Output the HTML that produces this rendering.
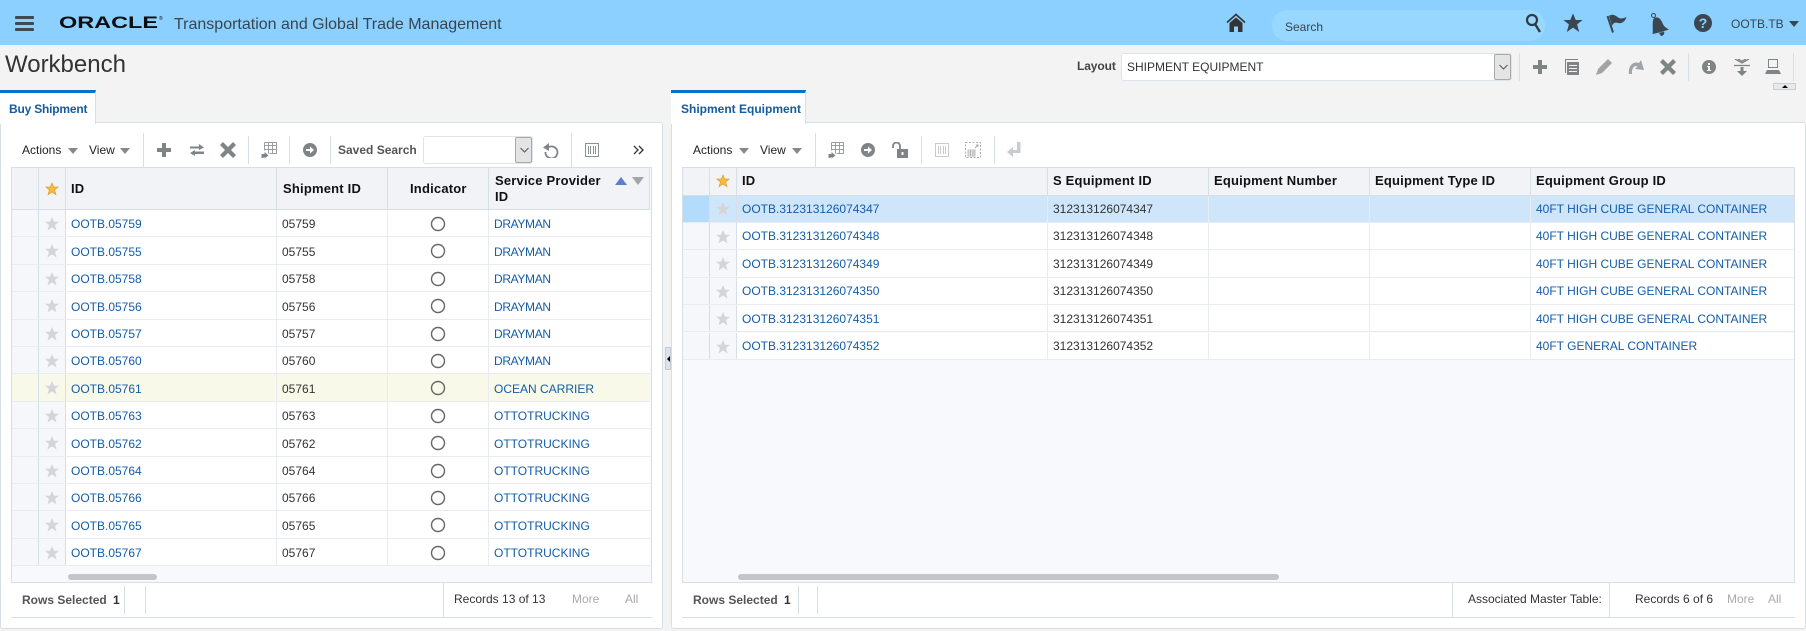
<!DOCTYPE html>
<html><head><meta charset="utf-8"><title>Workbench</title>
<style>
html,body{margin:0;padding:0}
body{width:1806px;height:631px;overflow:hidden;background:#f3f3f3;position:relative;font-family:"Liberation Sans",Arial,sans-serif;font-size:12px;color:#333}
.a,.t,svg.i{position:absolute}
.t{white-space:nowrap;line-height:14px}
.b{font-weight:bold}
.h{font-weight:bold;font-size:13px;color:#111;letter-spacing:.2px}
.vs{position:absolute;width:1px;background:#d6dfe6}
.hs{position:absolute;height:1px;background:#d6dfe6}
.tbl{position:absolute;background:#f7f9fc;border:1px solid #d6dfe6;box-sizing:border-box}
.r{position:absolute;height:27.4px;background:#fff;box-sizing:border-box;border-bottom:1px solid #e8ebef}
.r .t{top:6.5px}
#L .r .t{top:7.4px}
.c0{position:absolute;top:0;bottom:0;background:#f5f7fb;border-right:1px solid #d6dfe6}
.c1{position:absolute;top:0;bottom:0;background:#f5f7fb;border-right:1px solid #d6dfe6}
.v{position:absolute;top:0;bottom:0;width:1px;background:#e8ebef}
a,.l{color:#145ca8;text-decoration:none}
.dm{letter-spacing:-.35px}
.sel{background:#cfe6fa}
.sel .c0{background:#b3dbfb}.sel .c1{background:#cfe6fa}
.hl{background:#f8f9e9}.hl .c0,.hl .c1{background:#f8f9e9}
.hr{position:absolute;background:#f1f3f7;border-bottom:1px solid #d6dfe6;box-sizing:border-box}
.tri{position:absolute;width:0;height:0;border-left:5px solid transparent;border-right:5px solid transparent;border-top:6.5px solid #888}
.sb{position:absolute;height:6px;background:#c3c5c9;border-radius:3px;top:574px}
.sel-box{position:absolute;background:#fff;border:1px solid #dfe4ea;border-radius:3px;box-sizing:border-box}
.dd{position:absolute;right:0;top:0;bottom:0;width:17px;background:#e4e4e4;border:1px solid #a9a9a9;border-radius:2px;box-sizing:border-box}
.g{fill:#7f8487}
.lg{fill:#c9cccf}
</style></head>
<body>
<svg width="0" height="0" style="position:absolute">
<defs>
<polygon id="star" points="0,-7 2,-2.2 7,-2.2 3,1 4.5,6.5 0,3.4 -4.5,6.5 -3,1 -7,-2.2 -2,-2.2"/>
</defs>
</svg>

<!-- top bar -->
<div class="a" style="left:0;top:0;width:1806px;height:45px;background:#8cd0ff"></div>
<div class="a" style="left:15px;top:16px;width:19px;height:3px;background:#3d4a54;border-radius:1px"></div>
<div class="a" style="left:15px;top:22px;width:19px;height:3px;background:#3d4a54;border-radius:1px"></div>
<div class="a" style="left:15px;top:28px;width:19px;height:3px;background:#3d4a54;border-radius:1px"></div>
<svg class="i" style="left:55px;top:10px" width="112" height="24"><text x="4" y="18" font-family="Liberation Sans" font-size="16.5" font-weight="bold" fill="#0b0d10" textLength="99" lengthAdjust="spacingAndGlyphs">ORACLE</text><text x="104" y="10" font-family="Liberation Sans" font-size="5" fill="#0b0d10">®</text></svg>
<div class="t" style="left:174px;top:16px;font-size:16px;line-height:18px;color:#38454f">Transportation and Global Trade Management</div>
<svg class="i" style="left:1226px;top:13px" width="20" height="20"><path d="M1 9.5 10 1.5 19 9.5" fill="none" stroke="#333" stroke-width="1.6"/><path d="M3.5 10 10 4.5 16.500 10V19H12V13.500H8V19H3.500Z" fill="#333"/></svg>
<div class="a" style="left:1272px;top:10px;width:273px;height:31px;border-radius:15px;background:#98d7ff"></div>
<div class="t" style="left:1285px;top:20px;color:#38454f">Search</div>
<svg class="i" style="left:1524px;top:12px" width="20" height="24"><circle cx="8" cy="8" r="5" fill="none" stroke="#2f3a42" stroke-width="2.200"/><path d="M11 12 16 20" stroke="#2f3a42" stroke-width="2.400"/></svg>
<svg class="i" style="left:1562px;top:12px" width="22" height="22" viewBox="-8 -8 16 16"><use href="#star" fill="#3a4750"/></svg>
<svg class="i" style="left:1606px;top:12px" width="22" height="24"><path d="M1.500 4 7 20.500" stroke="#3a4750" stroke-width="2"/><path d="M3 4C7 1 10 4 13 6 16 7 18 6 20.500 5 19.500 9 16 12 12 11 9 10 7 11 6 14Z" fill="#3a4750"/></svg>
<svg class="i" style="left:1650px;top:11px" width="22" height="26"><circle cx="3.500" cy="4.500" r="2" fill="none" stroke="#3a4750"/><path d="M4 7C8 5 11 8 12.500 12 13.500 15 16 17 19 18.500 14 20 8 22 2.500 23 3.500 18 1.500 11 4 7Z" fill="#3a4750"/><path d="M9 22 14 20.500C15 23 13 25 11 25Z" fill="#3a4750"/></svg>
<svg class="i" style="left:1694px;top:14px" width="18" height="18"><circle cx="9" cy="9" r="9" fill="#3a4750"/><text x="9" y="14" text-anchor="middle" font-family="Liberation Sans" font-size="14" font-weight="bold" fill="#8cd0ff">?</text></svg>
<div class="t" style="left:1731px;top:17px;color:#38454f">OOTB.TB</div>
<div class="tri" style="left:1789px;top:21px;border-top-color:#3a4750"></div>

<!-- title / layout row -->
<div class="t" style="left:5px;top:52px;font-size:24px;line-height:26px;color:#333">Workbench</div>
<div class="t b" style="left:1077px;top:59px;color:#444;letter-spacing:-.1px">Layout</div>
<div class="sel-box" style="left:1121px;top:53px;width:391px;height:28px"><div class="dd"></div></div>
<svg class="i" style="left:1498px;top:62px" width="11" height="10"><path d="M1.500 3 5.500 7 9.500 3" fill="none" stroke="#555"/></svg>
<div class="t" style="left:1127px;top:60px;color:#333">SHIPMENT EQUIPMENT</div>
<div class="vs" style="left:1519px;top:53px;height:28px"></div>
<svg class="i" style="left:1532px;top:59px" width="16" height="16"><path d="M6 1h4v5h5v4h-5v5H6v-5H1V6h5z" class="g"/></svg>
<svg class="i" style="left:1564px;top:59px" width="16" height="17"><path d="M1 0h13v1H2v13H1z" class="g"/><path d="M3 3h12v13H3z" class="g"/><path d="M5 6.500h8M5 9.500h8M5 12.500h8" stroke="#f3f3f3"/></svg>
<svg class="i" style="left:1596px;top:59px" width="16" height="16"><path d="M12 0l4 4-10 10-6 2 2-6z" style="fill:#a0a4a7"/></svg>
<svg class="i" style="left:1628px;top:59px" width="17" height="16"><path d="M1 15C0 7 5 2 11 4L13 1 16 11 7 10 9.500 7.500C6.500 6 3.500 9 4 15Z" style="fill:#a0a4a7"/></svg>
<svg class="i" style="left:1660px;top:59px" width="16" height="16"><path d="M3 0 8 5 13 0 16 3 11 8 16 13 13 16 8 11 3 16 0 13 5 8 0 3Z" class="g"/></svg>
<div class="vs" style="left:1688px;top:53px;height:28px"></div>
<svg class="i" style="left:1702px;top:60px" width="14" height="14"><circle cx="7" cy="7" r="7" class="g"/><path d="M6 3h2v2H6zM5 6h3v4h1v1H5v-1h1V7H5z" fill="#f3f3f3"/></svg>
<svg class="i" style="left:1734px;top:59px" width="16" height="17"><path d="M1 0 8 4 15 0M4 0 8 2.200 12 0" fill="none" stroke="#7f8487" stroke-width="1.300"/><path d="M0 6.500h16" stroke="#7f8487" stroke-width="1.300"/><path d="M6.500 8h3v4H13l-5 5-5-5h3.500z" class="g"/></svg>
<svg class="i" style="left:1765px;top:59px" width="16" height="16"><rect x="3.500" y=".5" width="9" height="8" fill="none" stroke="#7f8487"/><path d="M2 11h12l2 4H0z" class="g"/></svg>
<div class="vs" style="left:1793px;top:53px;height:28px"></div>
<div class="a" style="left:1773px;top:83px;width:23px;height:7px;background:#e9e9e9;border:1px solid #c9ced3;box-sizing:border-box"></div>
<div class="a" style="left:1782px;top:85px;width:0;height:0;border-left:3px solid transparent;border-right:3px solid transparent;border-bottom:3px solid #000"></div>

<!-- panels -->
<div class="a" style="left:0;top:122px;width:663px;height:507px;background:#fff;border:1px solid #d6dfe6;border-radius:3px;box-sizing:border-box"></div>
<div class="a" style="left:671px;top:122px;width:1135px;height:507px;background:#fff;border:1px solid #d6dfe6;border-radius:3px;box-sizing:border-box"></div>
<div class="a" style="left:665px;top:347px;width:6px;height:23px;background:#dde3ea;border:1px solid #c4ccd4;box-sizing:border-box"></div>
<div class="a" style="left:667px;top:356px;width:0;height:0;border-top:3.500px solid transparent;border-bottom:3.500px solid transparent;border-right:3.500px solid #000"></div>

<!-- tabs -->
<div class="a" style="left:0;top:90px;width:96px;height:34px;background:#fff;border-top:3px solid #0572ce;border-right:1px solid #d6dfe6;box-sizing:border-box"></div>
<div class="t b" style="left:9px;top:102px;color:#145c9e;letter-spacing:-.2px">Buy Shipment</div>
<div class="a" style="left:671px;top:90px;width:135px;height:34px;background:#fff;border-top:3px solid #0572ce;border-right:1px solid #d6dfe6;box-sizing:border-box"></div>
<div class="t b" style="left:681px;top:102px;color:#145c9e">Shipment Equipment</div>

<!-- left toolbar -->
<div class="t" style="left:22px;top:143px;color:#222">Actions</div><div class="tri" style="left:68px;top:148px"></div>
<div class="t" style="left:89px;top:143px;color:#222">View</div><div class="tri" style="left:120px;top:148px"></div>
<div class="vs" style="left:143px;top:133px;height:34px"></div>
<svg class="i" style="left:156px;top:142px" width="16" height="16"><path d="M6 1h4v5h5v4h-5v5H6v-5H1V6h5z" class="g"/></svg>
<svg class="i" style="left:190px;top:144px" width="14" height="12"><path d="M0 2.500h9V0l5 3.500L9 6V4.500H0zM14 7.500H5V6L0 9l5 3v-2h9z" class="g"/></svg>
<svg class="i" style="left:220px;top:142px" width="16" height="16"><path d="M3 0 8 5 13 0 16 3 11 8 16 13 13 16 8 11 3 16 0 13 5 8 0 3Z" class="g"/></svg>
<div class="vs" style="left:248px;top:136px;height:28px"></div>
<svg class="i" style="left:261px;top:142px" width="16" height="17"><path d="M3.500 .5h12v11h-7M3.500 .5v8M3.500 3.500h12M3.500 7.500h12M7.500 .5v11M11.500 .5v11" fill="none" stroke="#9a9ea1"/><path d="M.5 16v-4h3V10l4 3.500-4 3V15H2.500v1z" class="g"/></svg>
<div class="vs" style="left:289px;top:136px;height:28px"></div>
<svg class="i" style="left:303px;top:143px" width="14" height="14"><circle cx="7" cy="7" r="7" class="g"/><path d="M3 6h4V3.500L11 7 7 10.500V8H3z" fill="#fff"/></svg>
<div class="vs" style="left:330px;top:136px;height:28px"></div>
<div class="t b" style="left:338px;top:143px;color:#555">Saved Search</div>
<div class="sel-box" style="left:423px;top:136px;width:110px;height:28px"><div class="dd"></div></div>
<svg class="i" style="left:519px;top:145px" width="11" height="10"><path d="M1.500 3 5.500 7 9.500 3" fill="none" stroke="#555"/></svg>
<svg class="i" style="left:543px;top:143px" width="16" height="15"><path d="M5 4.500A6 6 0 1 1 2.500 9" fill="none" stroke="#7f8487" stroke-width="1.800"/><path d="M0 4.500 6 0V8Z" class="g"/></svg>
<div class="vs" style="left:571px;top:133px;height:34px"></div>
<svg class="i" style="left:585px;top:143px" width="14" height="14"><rect x=".5" y=".5" width="13" height="13" fill="none" stroke="#8a8f92"/><path d="M3.500 3v8M5.500 3v8M8.500 3v8M10.500 3v8" stroke="#8a8f92"/></svg>
<svg class="i" style="left:633px;top:145px" width="11" height="10"><path d="M1 1 5 5 1 9M6 1 10 5 6 9" fill="none" stroke="#333" stroke-width="1.300"/></svg>

<!-- right toolbar -->
<div class="t" style="left:693px;top:143px;color:#222">Actions</div><div class="tri" style="left:739px;top:148px"></div>
<div class="t" style="left:760px;top:143px;color:#222">View</div><div class="tri" style="left:792px;top:148px"></div>
<div class="vs" style="left:815px;top:133px;height:34px"></div>
<svg class="i" style="left:828px;top:142px" width="16" height="17"><path d="M3.500 .5h12v11h-7M3.500 .5v8M3.500 3.500h12M3.500 7.500h12M7.500 .5v11M11.500 .5v11" fill="none" stroke="#9a9ea1"/><path d="M.5 16v-4h3V10l4 3.500-4 3V15H2.500v1z" class="g"/></svg>
<svg class="i" style="left:861px;top:143px" width="14" height="14"><circle cx="7" cy="7" r="7" class="g"/><path d="M3 6h4V3.500L11 7 7 10.500V8H3z" fill="#fff"/></svg>
<svg class="i" style="left:892px;top:142px" width="16" height="16"><path d="M1 6V4a3.500 3.500 0 0 1 7 0v3" fill="none" stroke="#7f8487" stroke-width="1.800"/><path d="M5 7h11v9H5z" class="g"/><path d="M9.500 10h2v3h-2z" fill="#fff"/></svg>
<div class="vs" style="left:921px;top:136px;height:28px"></div>
<svg class="i" style="left:935px;top:143px" width="14" height="14"><rect x=".5" y=".5" width="13" height="13" fill="none" stroke="#c9cccf"/><path d="M3.500 3v8M5.500 3v8M8.500 3v8M10.500 3v8" stroke="#c9cccf"/></svg>
<svg class="i" style="left:965px;top:142px" width="16" height="16"><rect x=".5" y=".5" width="15" height="15" fill="none" stroke="#a9adb0" stroke-dasharray="2 1.500"/><path d="M3 8h7v6H3zM3 10h7M3 12h7M5.500 8v6M8 8v6" fill="none" stroke="#a9adb0" stroke-width=".8"/><path d="M10 6l3-3M11 3h2v2" fill="none" stroke="#a9adb0"/></svg>
<div class="vs" style="left:994px;top:136px;height:28px"></div>
<svg class="i" style="left:1007px;top:142px" width="14" height="16"><path d="M10 0h3.500v11H6v4L0 10l6-5v3h4z" class="lg"/></svg>

<!-- left table -->
<div class="tbl" style="left:11px;top:167px;width:641px;height:416px"></div>
<div class="hr" style="left:12px;top:168px;width:638px;height:42px"></div>
<div class="vs" style="left:38px;top:168px;height:42px"></div>
<div class="vs" style="left:65px;top:168px;height:42px"></div>
<div class="vs" style="left:276px;top:168px;height:42px"></div>
<div class="vs" style="left:387px;top:168px;height:42px"></div>
<div class="vs" style="left:488px;top:168px;height:42px"></div>
<div class="vs" style="left:649px;top:168px;height:42px"></div>
<svg class="i" style="left:45px;top:182px" width="14" height="14" viewBox="-8 -8 16 16"><use href="#star" fill="#f4bd38" stroke="#d9982a" stroke-width=".7"/></svg>
<div class="t h" style="left:71px;top:182px">ID</div>
<div class="t h" style="left:283px;top:182px">Shipment ID</div>
<div class="t h" style="left:410px;top:182px">Indicator</div>
<div class="t h" style="left:495px;top:174px">Service Provider</div>
<div class="t h" style="left:495px;top:190px">ID</div>
<div class="a" style="left:615px;top:177px;width:0;height:0;border-left:6px solid transparent;border-right:6px solid transparent;border-bottom:8px solid #5a7fc8"></div>
<div class="a" style="left:632px;top:177px;width:0;height:0;border-left:6px solid transparent;border-right:6px solid transparent;border-top:8px solid #a5a5a5"></div>

<div class="a" id="L" style="left:12px;top:210px;width:638px;height:357px">
<div class="r" style="left:0;right:0;top:0"><div class="c0" style="left:0;width:26px"></div><div class="c1" style="left:27px;width:26px"></div><svg class="i" style="left:32px;top:6px" width="16" height="16" viewBox="-8 -8 16 16"><use href="#star" fill="#d4d5d7"/></svg><div class="v" style="left:264px"></div><div class="v" style="left:375px"></div><div class="v" style="left:476px"></div><div class="t l" style="left:59px">OOTB.05759</div><div class="t" style="left:270px">05759</div><svg class="i" style="left:418px;top:6px" width="16" height="16"><circle cx="8" cy="8" r="6.500" fill="none" stroke="#666" stroke-width="1.400"/></svg><div class="t l dm" style="left:482px">DRAYMAN</div></div>
<div class="r" style="left:0;right:0;top:27.4px"><div class="c0" style="left:0;width:26px"></div><div class="c1" style="left:27px;width:26px"></div><svg class="i" style="left:32px;top:6px" width="16" height="16" viewBox="-8 -8 16 16"><use href="#star" fill="#d4d5d7"/></svg><div class="v" style="left:264px"></div><div class="v" style="left:375px"></div><div class="v" style="left:476px"></div><div class="t l" style="left:59px">OOTB.05755</div><div class="t" style="left:270px">05755</div><svg class="i" style="left:418px;top:6px" width="16" height="16"><circle cx="8" cy="8" r="6.500" fill="none" stroke="#666" stroke-width="1.400"/></svg><div class="t l dm" style="left:482px">DRAYMAN</div></div>
<div class="r" style="left:0;right:0;top:54.8px"><div class="c0" style="left:0;width:26px"></div><div class="c1" style="left:27px;width:26px"></div><svg class="i" style="left:32px;top:6px" width="16" height="16" viewBox="-8 -8 16 16"><use href="#star" fill="#d4d5d7"/></svg><div class="v" style="left:264px"></div><div class="v" style="left:375px"></div><div class="v" style="left:476px"></div><div class="t l" style="left:59px">OOTB.05758</div><div class="t" style="left:270px">05758</div><svg class="i" style="left:418px;top:6px" width="16" height="16"><circle cx="8" cy="8" r="6.500" fill="none" stroke="#666" stroke-width="1.400"/></svg><div class="t l dm" style="left:482px">DRAYMAN</div></div>
<div class="r" style="left:0;right:0;top:82.2px"><div class="c0" style="left:0;width:26px"></div><div class="c1" style="left:27px;width:26px"></div><svg class="i" style="left:32px;top:6px" width="16" height="16" viewBox="-8 -8 16 16"><use href="#star" fill="#d4d5d7"/></svg><div class="v" style="left:264px"></div><div class="v" style="left:375px"></div><div class="v" style="left:476px"></div><div class="t l" style="left:59px">OOTB.05756</div><div class="t" style="left:270px">05756</div><svg class="i" style="left:418px;top:6px" width="16" height="16"><circle cx="8" cy="8" r="6.500" fill="none" stroke="#666" stroke-width="1.400"/></svg><div class="t l dm" style="left:482px">DRAYMAN</div></div>
<div class="r" style="left:0;right:0;top:109.6px"><div class="c0" style="left:0;width:26px"></div><div class="c1" style="left:27px;width:26px"></div><svg class="i" style="left:32px;top:6px" width="16" height="16" viewBox="-8 -8 16 16"><use href="#star" fill="#d4d5d7"/></svg><div class="v" style="left:264px"></div><div class="v" style="left:375px"></div><div class="v" style="left:476px"></div><div class="t l" style="left:59px">OOTB.05757</div><div class="t" style="left:270px">05757</div><svg class="i" style="left:418px;top:6px" width="16" height="16"><circle cx="8" cy="8" r="6.500" fill="none" stroke="#666" stroke-width="1.400"/></svg><div class="t l dm" style="left:482px">DRAYMAN</div></div>
<div class="r" style="left:0;right:0;top:137px"><div class="c0" style="left:0;width:26px"></div><div class="c1" style="left:27px;width:26px"></div><svg class="i" style="left:32px;top:6px" width="16" height="16" viewBox="-8 -8 16 16"><use href="#star" fill="#d4d5d7"/></svg><div class="v" style="left:264px"></div><div class="v" style="left:375px"></div><div class="v" style="left:476px"></div><div class="t l" style="left:59px">OOTB.05760</div><div class="t" style="left:270px">05760</div><svg class="i" style="left:418px;top:6px" width="16" height="16"><circle cx="8" cy="8" r="6.500" fill="none" stroke="#666" stroke-width="1.400"/></svg><div class="t l dm" style="left:482px">DRAYMAN</div></div>
<div class="r hl" style="left:0;right:0;top:164.4px"><div class="c0" style="left:0;width:26px"></div><div class="c1" style="left:27px;width:26px"></div><svg class="i" style="left:32px;top:6px" width="16" height="16" viewBox="-8 -8 16 16"><use href="#star" fill="#d4d5d7"/></svg><div class="v" style="left:264px"></div><div class="v" style="left:375px"></div><div class="v" style="left:476px"></div><div class="t l" style="left:59px">OOTB.05761</div><div class="t" style="left:270px">05761</div><svg class="i" style="left:418px;top:6px" width="16" height="16"><circle cx="8" cy="8" r="6.500" fill="none" stroke="#666" stroke-width="1.400"/></svg><div class="t l" style="left:482px">OCEAN CARRIER</div></div>
<div class="r" style="left:0;right:0;top:191.8px"><div class="c0" style="left:0;width:26px"></div><div class="c1" style="left:27px;width:26px"></div><svg class="i" style="left:32px;top:6px" width="16" height="16" viewBox="-8 -8 16 16"><use href="#star" fill="#d4d5d7"/></svg><div class="v" style="left:264px"></div><div class="v" style="left:375px"></div><div class="v" style="left:476px"></div><div class="t l" style="left:59px">OOTB.05763</div><div class="t" style="left:270px">05763</div><svg class="i" style="left:418px;top:6px" width="16" height="16"><circle cx="8" cy="8" r="6.500" fill="none" stroke="#666" stroke-width="1.400"/></svg><div class="t l" style="left:482px">OTTOTRUCKING</div></div>
<div class="r" style="left:0;right:0;top:219.2px"><div class="c0" style="left:0;width:26px"></div><div class="c1" style="left:27px;width:26px"></div><svg class="i" style="left:32px;top:6px" width="16" height="16" viewBox="-8 -8 16 16"><use href="#star" fill="#d4d5d7"/></svg><div class="v" style="left:264px"></div><div class="v" style="left:375px"></div><div class="v" style="left:476px"></div><div class="t l" style="left:59px">OOTB.05762</div><div class="t" style="left:270px">05762</div><svg class="i" style="left:418px;top:6px" width="16" height="16"><circle cx="8" cy="8" r="6.500" fill="none" stroke="#666" stroke-width="1.400"/></svg><div class="t l" style="left:482px">OTTOTRUCKING</div></div>
<div class="r" style="left:0;right:0;top:246.6px"><div class="c0" style="left:0;width:26px"></div><div class="c1" style="left:27px;width:26px"></div><svg class="i" style="left:32px;top:6px" width="16" height="16" viewBox="-8 -8 16 16"><use href="#star" fill="#d4d5d7"/></svg><div class="v" style="left:264px"></div><div class="v" style="left:375px"></div><div class="v" style="left:476px"></div><div class="t l" style="left:59px">OOTB.05764</div><div class="t" style="left:270px">05764</div><svg class="i" style="left:418px;top:6px" width="16" height="16"><circle cx="8" cy="8" r="6.500" fill="none" stroke="#666" stroke-width="1.400"/></svg><div class="t l" style="left:482px">OTTOTRUCKING</div></div>
<div class="r" style="left:0;right:0;top:274px"><div class="c0" style="left:0;width:26px"></div><div class="c1" style="left:27px;width:26px"></div><svg class="i" style="left:32px;top:6px" width="16" height="16" viewBox="-8 -8 16 16"><use href="#star" fill="#d4d5d7"/></svg><div class="v" style="left:264px"></div><div class="v" style="left:375px"></div><div class="v" style="left:476px"></div><div class="t l" style="left:59px">OOTB.05766</div><div class="t" style="left:270px">05766</div><svg class="i" style="left:418px;top:6px" width="16" height="16"><circle cx="8" cy="8" r="6.500" fill="none" stroke="#666" stroke-width="1.400"/></svg><div class="t l" style="left:482px">OTTOTRUCKING</div></div>
<div class="r" style="left:0;right:0;top:301.4px"><div class="c0" style="left:0;width:26px"></div><div class="c1" style="left:27px;width:26px"></div><svg class="i" style="left:32px;top:6px" width="16" height="16" viewBox="-8 -8 16 16"><use href="#star" fill="#d4d5d7"/></svg><div class="v" style="left:264px"></div><div class="v" style="left:375px"></div><div class="v" style="left:476px"></div><div class="t l" style="left:59px">OOTB.05765</div><div class="t" style="left:270px">05765</div><svg class="i" style="left:418px;top:6px" width="16" height="16"><circle cx="8" cy="8" r="6.500" fill="none" stroke="#666" stroke-width="1.400"/></svg><div class="t l" style="left:482px">OTTOTRUCKING</div></div>
<div class="r" style="left:0;right:0;top:328.8px"><div class="c0" style="left:0;width:26px"></div><div class="c1" style="left:27px;width:26px"></div><svg class="i" style="left:32px;top:6px" width="16" height="16" viewBox="-8 -8 16 16"><use href="#star" fill="#d4d5d7"/></svg><div class="v" style="left:264px"></div><div class="v" style="left:375px"></div><div class="v" style="left:476px"></div><div class="t l" style="left:59px">OOTB.05767</div><div class="t" style="left:270px">05767</div><svg class="i" style="left:418px;top:6px" width="16" height="16"><circle cx="8" cy="8" r="6.500" fill="none" stroke="#666" stroke-width="1.400"/></svg><div class="t l" style="left:482px">OTTOTRUCKING</div></div>
</div>
<div class="sb" style="left:68px;width:89px"></div>

<!-- left footer -->
<div class="hs" style="left:11px;top:617px;width:641px"></div>
<div class="t b" style="left:22px;top:593px;color:#555">Rows Selected</div>
<div class="t b" style="left:113px;top:593px;color:#333">1</div>
<div class="vs" style="left:124px;top:586px;height:28px"></div>
<div class="vs" style="left:145px;top:586px;height:28px"></div>
<div class="vs" style="left:443px;top:583px;height:34px"></div>
<div class="t" style="left:454px;top:592px;color:#333">Records 13 of 13</div>
<div class="t" style="left:572px;top:592px;color:#aaa">More</div>
<div class="t" style="left:625px;top:592px;color:#aaa">All</div>

<!-- right table -->
<div class="tbl" style="left:682px;top:167px;width:1113px;height:416px"></div>
<div class="hr" style="left:683px;top:168px;width:1111px;height:27.5px"></div>
<div class="vs" style="left:709px;top:168px;height:27px"></div>
<div class="vs" style="left:736px;top:168px;height:27px"></div>
<div class="vs" style="left:1047px;top:168px;height:27px"></div>
<div class="vs" style="left:1208px;top:168px;height:27px"></div>
<div class="vs" style="left:1369px;top:168px;height:27px"></div>
<div class="vs" style="left:1530px;top:168px;height:27px"></div>
<svg class="i" style="left:716px;top:174px" width="14" height="14" viewBox="-8 -8 16 16"><use href="#star" fill="#f4bd38" stroke="#d9982a" stroke-width=".7"/></svg>
<div class="t h" style="left:742px;top:174px">ID</div>
<div class="t h" style="left:1053px;top:174px">S Equipment ID</div>
<div class="t h" style="left:1214px;top:174px">Equipment Number</div>
<div class="t h" style="left:1375px;top:174px">Equipment Type ID</div>
<div class="t h" style="left:1536px;top:174px">Equipment Group ID</div>

<div class="a" style="left:683px;top:195.500px;width:1111px;height:165px">
<div class="r sel" style="left:0;right:0;top:0"><div class="c0" style="left:0;width:26px"></div><div class="c1" style="left:27px;width:26px"></div><svg class="i" style="left:32px;top:5px" width="16" height="16" viewBox="-8 -8 16 16"><use href="#star" fill="#d4d5d7"/></svg><div class="v" style="left:364px"></div><div class="v" style="left:525px"></div><div class="v" style="left:686px"></div><div class="v" style="left:847px"></div><div class="t l" style="left:59px">OOTB.312313126074347</div><div class="t" style="left:370px">312313126074347</div><div class="t l" style="left:853px">40FT HIGH CUBE GENERAL CONTAINER</div></div>
<div class="r" style="left:0;right:0;top:27.4px"><div class="c0" style="left:0;width:26px"></div><div class="c1" style="left:27px;width:26px"></div><svg class="i" style="left:32px;top:6px" width="16" height="16" viewBox="-8 -8 16 16"><use href="#star" fill="#d4d5d7"/></svg><div class="v" style="left:364px"></div><div class="v" style="left:525px"></div><div class="v" style="left:686px"></div><div class="v" style="left:847px"></div><div class="t l" style="left:59px">OOTB.312313126074348</div><div class="t" style="left:370px">312313126074348</div><div class="t l" style="left:853px">40FT HIGH CUBE GENERAL CONTAINER</div></div>
<div class="r" style="left:0;right:0;top:54.8px"><div class="c0" style="left:0;width:26px"></div><div class="c1" style="left:27px;width:26px"></div><svg class="i" style="left:32px;top:6px" width="16" height="16" viewBox="-8 -8 16 16"><use href="#star" fill="#d4d5d7"/></svg><div class="v" style="left:364px"></div><div class="v" style="left:525px"></div><div class="v" style="left:686px"></div><div class="v" style="left:847px"></div><div class="t l" style="left:59px">OOTB.312313126074349</div><div class="t" style="left:370px">312313126074349</div><div class="t l" style="left:853px">40FT HIGH CUBE GENERAL CONTAINER</div></div>
<div class="r" style="left:0;right:0;top:82.2px"><div class="c0" style="left:0;width:26px"></div><div class="c1" style="left:27px;width:26px"></div><svg class="i" style="left:32px;top:6px" width="16" height="16" viewBox="-8 -8 16 16"><use href="#star" fill="#d4d5d7"/></svg><div class="v" style="left:364px"></div><div class="v" style="left:525px"></div><div class="v" style="left:686px"></div><div class="v" style="left:847px"></div><div class="t l" style="left:59px">OOTB.312313126074350</div><div class="t" style="left:370px">312313126074350</div><div class="t l" style="left:853px">40FT HIGH CUBE GENERAL CONTAINER</div></div>
<div class="r" style="left:0;right:0;top:109.6px"><div class="c0" style="left:0;width:26px"></div><div class="c1" style="left:27px;width:26px"></div><svg class="i" style="left:32px;top:6px" width="16" height="16" viewBox="-8 -8 16 16"><use href="#star" fill="#d4d5d7"/></svg><div class="v" style="left:364px"></div><div class="v" style="left:525px"></div><div class="v" style="left:686px"></div><div class="v" style="left:847px"></div><div class="t l" style="left:59px">OOTB.312313126074351</div><div class="t" style="left:370px">312313126074351</div><div class="t l" style="left:853px">40FT HIGH CUBE GENERAL CONTAINER</div></div>
<div class="r" style="left:0;right:0;top:137px"><div class="c0" style="left:0;width:26px"></div><div class="c1" style="left:27px;width:26px"></div><svg class="i" style="left:32px;top:6px" width="16" height="16" viewBox="-8 -8 16 16"><use href="#star" fill="#d4d5d7"/></svg><div class="v" style="left:364px"></div><div class="v" style="left:525px"></div><div class="v" style="left:686px"></div><div class="v" style="left:847px"></div><div class="t l" style="left:59px">OOTB.312313126074352</div><div class="t" style="left:370px">312313126074352</div><div class="t l" style="left:853px">40FT GENERAL CONTAINER</div></div>
</div>
<div class="sb" style="left:738px;width:541px"></div>

<!-- right footer -->
<div class="hs" style="left:682px;top:617px;width:1113px"></div>
<div class="t b" style="left:693px;top:593px;color:#555">Rows Selected</div>
<div class="t b" style="left:784px;top:593px;color:#333">1</div>
<div class="vs" style="left:798px;top:586px;height:28px"></div>
<div class="vs" style="left:817px;top:586px;height:28px"></div>
<div class="vs" style="left:1452px;top:583px;height:34px"></div>
<div class="t" style="left:1468px;top:592px;color:#333">Associated Master Table:</div>
<div class="vs" style="left:1609px;top:583px;height:34px"></div>
<div class="t" style="left:1635px;top:592px;color:#333">Records 6 of 6</div>
<div class="t" style="left:1727px;top:592px;color:#aaa">More</div>
<div class="t" style="left:1768px;top:592px;color:#aaa">All</div>
</body></html>
